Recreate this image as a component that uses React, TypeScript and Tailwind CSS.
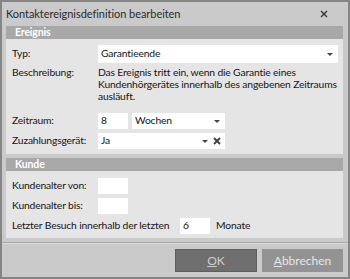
import React from "react";

const font = { fontFamily: 'Lato, "Open Sans", sans-serif' };

function Arrow() {
  return <span className="w-0 h-0 shrink-0 border-l-[3px] border-r-[3px] border-t-[3px] border-l-transparent border-r-transparent border-t-[#444]" />;
}

export default function App() {
  return (
    <div className="w-[350px] h-[279px] bg-[#cacaca] border-2 border-[#858585] flex flex-col text-[10.3px] tracking-[-0.15px] text-[#151515] whitespace-nowrap" style={font}>
      <div className="h-[24px] shrink-0 flex items-center justify-between pl-[4px] pr-[20px] text-[11px] tracking-[-0.05px] text-[#2a2a2a]">
        <span>Kontaktereignisdefinition bearbeiten</span>
        <svg width="8" height="8" viewBox="0 0 8 8"><path d="M1 1L7 7M7 1L1 7" stroke="#333" strokeWidth="1.4" /></svg>
      </div>
      <div className="ml-[4px] mr-[5px] flex flex-col">
        <div className="h-[13px] bg-[#a8a8a8] text-white font-bold text-[10.5px] pl-[9px] flex items-center leading-none">Ereignis</div>
        <div className="bg-[#e5e5e5] pl-[6px] pr-[5px] pt-[6px] pb-[5px] flex flex-col">
          <div className="flex items-center h-[18px]">
            <span className="w-[86px] shrink-0">Typ:</span>
            <div className="flex-1 h-[18px] bg-white flex items-center justify-between pl-[3px] pr-[5px]">
              <span>Garantieende</span>
              <Arrow />
            </div>
          </div>
          <div className="flex mt-[3px]">
            <span className="w-[86px] shrink-0 leading-[12px]">Beschreibung:</span>
            <div className="flex-1 leading-[12px]">
              Das Ereignis tritt ein, wenn die Garantie eines<br />
              Kundenhörgerätes innerhalb des angebenen Zeitraums<br />
              ausläuft.
            </div>
          </div>
          <div className="flex items-center h-[16px] mt-[11px]">
            <span className="w-[86px] shrink-0">Zeitraum:</span>
            <div className="w-[30px] shrink-0 h-[16px] bg-white pl-[3px] flex items-center">8</div>
            <div className="w-[93px] shrink-0 ml-[4px] h-[16px] bg-white flex items-center justify-between pl-[3px] pr-[5px]">
              <span>Wochen</span>
              <Arrow />
            </div>
          </div>
          <div className="flex items-center h-[16px] mt-[4px]">
            <span className="w-[86px] shrink-0">Zuzahlungsgerät:</span>
            <div className="w-[127px] shrink-0 h-[16px] bg-white flex items-center pl-[3px] pr-[4px]">
              <span className="flex-1">Ja</span>
              <Arrow />
              <svg className="ml-[5px] shrink-0" width="8" height="8" viewBox="0 0 8 8"><path d="M1 1L7 7M7 1L1 7" stroke="#444" strokeWidth="2" /></svg>
            </div>
          </div>
        </div>
        <div className="h-[13px] mt-[4px] bg-[#a8a8a8] text-white font-bold text-[10.5px] pl-[9px] flex items-center leading-none">Kunde</div>
        <div className="bg-[#e5e5e5] px-[6px] pt-[7px] pb-[4px] flex flex-col gap-[4px]">
          <div className="flex items-center h-[16px]">
            <span className="w-[86px] shrink-0">Kundenalter von:</span>
            <div className="w-[30px] shrink-0 h-[16px] bg-white" />
          </div>
          <div className="flex items-center h-[16px]">
            <span className="w-[86px] shrink-0">Kundenalter bis:</span>
            <div className="w-[30px] shrink-0 h-[16px] bg-white" />
          </div>
          <div className="flex items-center h-[16px]">
            <span className="w-[168px] shrink-0">Letzter Besuch innerhalb der letzten</span>
            <div className="w-[30px] shrink-0 h-[16px] bg-white pl-[3px] flex items-center">6</div>
            <span className="ml-[6px]">Monate</span>
          </div>
        </div>
      </div>
      <div className="mt-[4px] shrink-0 border-t border-t-[#a9a9a9] border-b border-b-[#dadada]" />
      <div className="flex justify-end gap-[5px] pr-[5px] mt-[5px] shrink-0">
        <button className="w-[82px] h-[23px] bg-[#6f6f6f] border border-[#5e5e5e] text-[#cfcfcf] text-[12px] tracking-normal"><u>O</u>K</button>
        <button className="w-[81px] h-[23px] bg-[#939393] text-[#e6e6e6] text-[12px] tracking-normal"><u>A</u>bbrechen</button>
      </div>
    </div>
  );
}
